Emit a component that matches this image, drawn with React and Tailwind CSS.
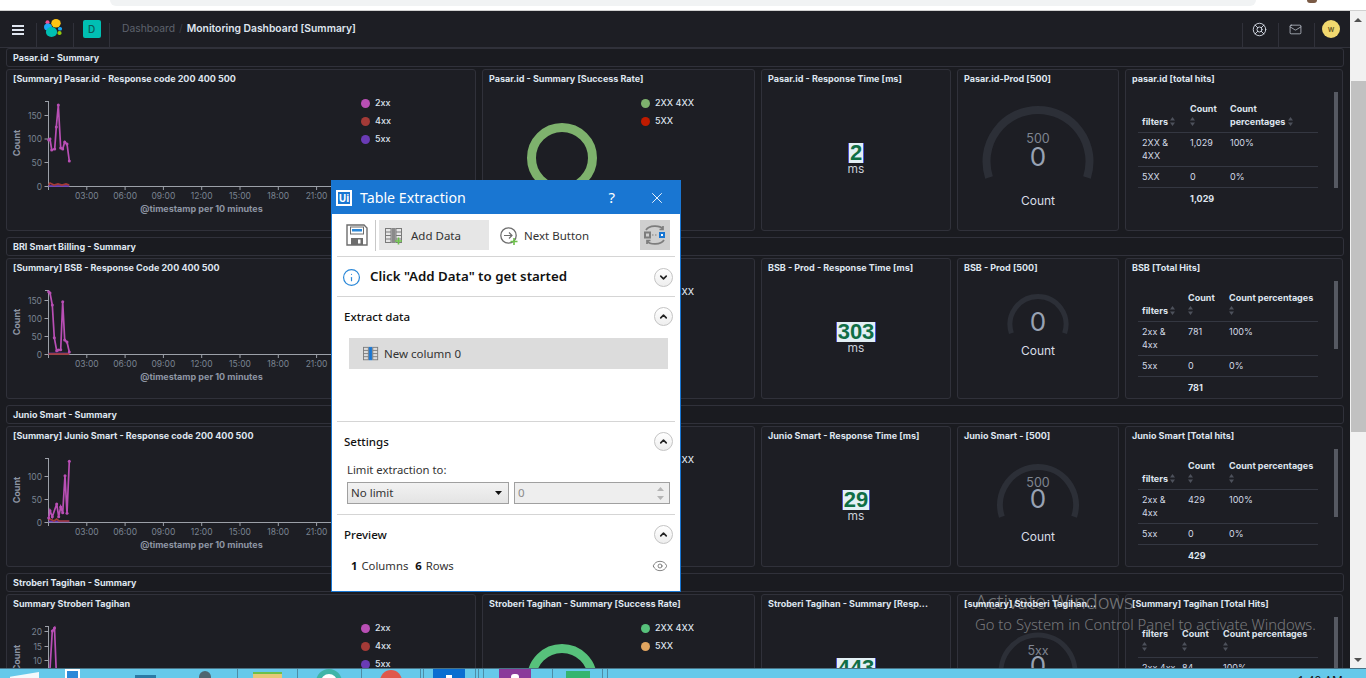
import React from 'react';
import { ChevronDown, ChevronUp, Eye, Info, LifeBuoy, Mail, X } from 'lucide-react';

const FONT_DASH = 'font-["Inter",sans-serif]';
const FONT_DIALOG = 'font-["Noto_Sans",sans-serif]';

const HOURS = ['03:00', '06:00', '09:00', '12:00', '15:00', '18:00', '21:00'];

const SECTIONS = [
    {
        name: 'Pasar.id - Summary',
        panelHeight: 'h-[162px]',
        chart: {
            title: '[Summary] Pasar.id - Response code 200 400 500',
            axisTop: 13,
            axisBottom: 98,
            ticks: [[150, 27], [100, 50.5], [50, 74], [0, 98]],
            labelY: 111,
            captionY: 124,
            countY: 55,
            pink: [[41.7, 52], [43, 51], [44.7, 62], [47.7, 61], [49.3, 39], [51.3, 17], [53.7, 60], [55.7, 61], [57.7, 54], [60, 56], [62.3, 73]],
            red: [[41.7, 97], [43, 95], [47, 97], [51, 96], [55, 97], [59, 96], [62.3, 97]],
            blue: [[41.7, 98], [62.3, 98]],
        },
        donut: { title: 'Pasar.id - Summary [Success Rate]', y: 70, color: '#7eb26d', second: '#bf1b00', labels: ['2XX 4XX', '5XX'] },
        metric: { title: 'Pasar.id - Response Time [ms]', value: '2' },
        gauge: { title: 'Pasar.id-Prod [500]', r: 51.5, stroke: 8, cy: 73.5, top: '500', topY: 55, zeroY: 78, countY: 117 },
        table: {
            title: 'pasar.id [total hits]',
            cols: ['w-[48px]', 'w-[40px]', 'w-[92px]'],
            pctBreak: true,
            rows: [['2XX &\n4XX', '1,029', '100%'], ['5XX', '0', '0%']],
            total: '1,029',
            thumb: 'h-[96px]',
        },
    },
    {
        name: 'BRI Smart Billing - Summary',
        panelHeight: 'h-[141px]',
        chart: {
            title: '[Summary] BSB - Response Code 200 400 500',
            axisTop: 13,
            axisBottom: 77,
            ticks: [[150, 23], [100, 41], [50, 59], [0, 77]],
            labelY: 90,
            captionY: 103,
            countY: 45,
            pink: [[41.7, 14.7], [43, 16], [45.3, 28], [47.3, 60.7], [49.7, 73.7], [51.3, 73], [53.7, 72.7], [55.7, 24.7], [57.7, 63], [60, 65], [62.3, 75]],
            red: [[41.7, 77], [62.3, 77]],
            blue: [[41.7, 76.5], [62.3, 76.5]],
        },
        donut: { title: 'BSB - Summary [Success Rate]', y: 62, color: '#7eb26d', second: '#bf1b00', labels: ['2XX 4XX', '5XX'] },
        metric: { title: 'BSB - Prod - Response Time [ms]', value: '303' },
        gauge: { title: 'BSB - Prod [500]', r: 28, stroke: 5, cy: 47.5, zeroY: 54, countY: 78 },
        table: {
            title: 'BSB [Total Hits]',
            cols: ['w-[46px]', 'w-[41px]', 'w-[93px]'],
            rows: [['2xx &\n4xx', '781', '100%'], ['5xx', '0', '0%']],
            total: '781',
            thumb: 'h-[68px]',
        },
    },
    {
        name: 'Junio Smart - Summary',
        panelHeight: 'h-[141px]',
        chart: {
            title: '[Summary] Junio Smart - Response code 200 400 500',
            axisTop: 13,
            axisBottom: 77,
            ticks: [[100, 31], [50, 54], [0, 77]],
            labelY: 90,
            captionY: 103,
            countY: 45,
            pink: [[41.7, 73], [43, 65.7], [45.3, 71.7], [49.7, 59], [51.7, 71.7], [53.7, 62], [55.7, 67.7], [58, 30.7], [60, 68.3], [62.3, 16.3]],
            red: [[41.7, 75], [43, 74], [47, 76], [49.7, 74], [52, 76], [62.3, 76]],
            blue: [[41.7, 76.5], [62.3, 76.5]],
        },
        donut: { title: 'Junio Smart - Summary [Success Rate]', y: 62, color: '#7eb26d', second: '#bf1b00', labels: ['2XX 4XX', '5XX'] },
        metric: { title: 'Junio Smart - Response Time [ms]', value: '29' },
        gauge: { title: 'Junio Smart - [500]', r: 38, stroke: 6, cy: 60, top: '500', topY: 42, zeroY: 63, countY: 96 },
        table: {
            title: 'Junio Smart [Total hits]',
            cols: ['w-[46px]', 'w-[41px]', 'w-[93px]'],
            rows: [['2xx &\n4xx', '429', '100%'], ['5xx', '0', '0%']],
            total: '429',
            thumb: 'h-[68px]',
        },
    },
    {
        name: 'Stroberi Tagihan - Summary',
        panelHeight: 'h-[141px]',
        chart: {
            title: 'Summary Stroberi Tagihan',
            axisTop: 13,
            axisBottom: 77,
            ticks: [[20, 18], [15, 33], [10, 47], [5, 62], [0, 77]],
            labelY: 90,
            captionY: 103,
            countY: 45,
            pink: [[41.7, 77], [45.3, 18], [47.5, 15], [50, 77]],
            red: [[41.7, 77], [62.3, 77]],
            blue: [[41.7, 77], [62.3, 77]],
        },
        donut: { title: 'Stroberi Tagihan - Summary [Success Rate]', y: 66, color: '#57c17b', second: '#e0a45f', labels: ['2XX 4XX', '5XX'] },
        metric: { title: 'Stroberi Tagihan - Summary [Resp...', value: '443' },
        gauge: { title: '[summary] Stroberi Tagihan...', r: 37, stroke: 5, cy: 59, top: '5xx', topY: 42, zeroY: 62, countY: 96 },
        table: {
            title: '[Summary] Tagihan [Total Hits]',
            cols: ['w-[40px]', 'w-[41px]', 'w-[99px]'],
            filtersStacked: true,
            rows: [['2xx 4xx', '84', '100%'], ['5xx', '0', '0%']],
            total: '84',
            thumb: 'h-[68px]',
        },
    },
];

const Panel = ({ title, children }) => (
    <div className="flex h-full min-h-0 min-w-0 flex-col rounded-[3px] border border-[#30313a] bg-[#1d1e24]">
        <div className="h-[18px] shrink-0 truncate px-[6px] pt-[2px] text-[9px] leading-[13px] font-bold text-[#dfe5ef]">{title}</div>
        <div className="flex min-h-0 flex-1">{children}</div>
    </div>
);

const Legend = ({ items }) => (
    <ul className="pt-[6px]">
        {items.map(([label, color]) => (
            <li key={label} className="flex h-[18px] items-center gap-[5px] whitespace-nowrap text-[9px] font-medium text-[#dfe5ef]">
                <span className="h-[9px] w-[9px] rounded-full" style={{ backgroundColor: color }} />
                {label}
            </li>
        ))}
    </ul>
);

const Line = ({ points, color, dots }) => (
    <g>
        <polyline points={points.map((p) => p.join(',')).join(' ')} fill="none" stroke={color} strokeWidth="1.7" />
        {dots && points.map((p) => <circle key={p.join()} cx={p[0]} cy={p[1]} r="1.5" fill={color} />)}
    </g>
);

const LineChart = ({ chart }) => {
    const { axisTop, axisBottom, ticks, labelY, captionY, countY } = chart;
    return (
        <svg width="354" className="h-full shrink-0 font-['Inter',sans-serif]">
            <line x1="41.5" y1={axisTop} x2="41.5" y2={axisBottom} stroke="#9ca0a8" />
            <line x1="38" y1={axisTop + 0.5} x2="41.5" y2={axisTop + 0.5} stroke="#9ca0a8" />
            <line x1="41.5" y1={axisBottom + 0.5} x2="354" y2={axisBottom + 0.5} stroke="#9ca0a8" />
            {ticks.map(([value, y]) => (
                <g key={value}>
                    <line x1="37.5" y1={y + 0.5} x2="41.5" y2={y + 0.5} stroke="#9ca0a8" />
                    <text x="35" y={y + 3.5} textAnchor="end" fontSize="8.5" fill="#7a8391">{value}</text>
                </g>
            ))}
            <line x1="41.5" y1={axisBottom} x2="41.5" y2={axisBottom + 4} stroke="#9ca0a8" />
            {HOURS.map((hour, i) => (
                <g key={hour}>
                    <line x1={79.8 + i * 38.3} y1={axisBottom} x2={79.8 + i * 38.3} y2={axisBottom + 4} stroke="#9ca0a8" />
                    <text x={79.8 + i * 38.3} y={labelY} textAnchor="middle" fontSize="8.5" fill="#7a8391">{hour}</text>
                </g>
            ))}
            <text x="194.5" y={captionY} textAnchor="middle" fontSize="9" fontWeight="700" fill="#8d95a3">@timestamp per 10 minutes</text>
            <text transform={`translate(13 ${countY}) rotate(-90)`} textAnchor="middle" fontSize="9" fontWeight="700" fill="#8d95a3">Count</text>
            <Line points={chart.blue} color="#6a3bb5" />
            <Line points={chart.red} color="#a33a37" />
            <Line points={chart.pink} color="#b94fb5" dots />
        </svg>
    );
};

const Donut = ({ donut }) => (
    <>
        <svg width="158" className="h-full shrink-0">
            <circle cx="79" cy={donut.y} r="30.5" fill="none" stroke={donut.color} strokeWidth="9" />
        </svg>
        <Legend items={[[donut.labels[0], donut.color], [donut.labels[1], donut.second]]} />
    </>
);

const Metric = ({ value }) => (
    <div className="flex flex-1 flex-col items-center justify-center">
        <span className="h-[20px] border-x border-[#4b52c8] bg-[#e3f0f5] px-px font-['Liberation_Sans',sans-serif] text-[22px] leading-[20px] font-bold text-[#0f6e45]">{value}</span>
        <span className="text-[12px] leading-[12px] text-[#c9ced8]">ms</span>
    </div>
);

// arc runs over the top, from lower left to lower right
const arcPath = (cx, cy, r) => {
    const a = (18 * Math.PI) / 180;
    const dx = r * Math.cos(a);
    const dy = r * Math.sin(a);
    return `M ${cx - dx} ${cy + dy} A ${r} ${r} 0 1 1 ${cx + dx} ${cy + dy}`;
};

const Gauge = ({ gauge }) => (
    <svg width="160" className="h-full font-['Inter',sans-serif]">
        <path d={arcPath(80, gauge.cy, gauge.r)} fill="none" stroke="#2c2f37" strokeWidth={gauge.stroke} />
        {gauge.top && <text x="80" y={gauge.topY} textAnchor="middle" fontSize="12.5" fill="#7f8591">{gauge.top}</text>}
        <text x="80" y={gauge.zeroY} textAnchor="middle" fontSize="26" fill="#98a2b3">0</text>
        <text x="80" y={gauge.countY} textAnchor="middle" fontSize="12" fill="#d8dde6">Count</text>
    </svg>
);

const SortIcon = ({ block }) => (
    <svg width="5" height="9" viewBox="0 0 5 9" className={block ? 'my-[2px] block' : 'inline-block align-[-1px]'}>
        <path d="M2.5 0 5 3.5H0z M2.5 9 0 5.5h5z" fill="#4d515b" />
    </svg>
);

const HitsTable = ({ table }) => (
    <div className="flex flex-1 pl-[12px]">
        <table className="mt-[11px] h-fit w-[180px] table-fixed border-collapse self-start text-[9px] leading-[13px] text-[#d3dae6]">
            <colgroup>
                {table.cols.map((c) => <col key={c} className={c} />)}
            </colgroup>
            <thead>
                <tr className="border-b border-[#343741] align-bottom text-[#dfe5ef]">
                    {table.filtersStacked ? (
                        <th className="pt-[3px] pb-[4px] pl-[4px] text-left font-bold">filters<SortIcon block /></th>
                    ) : (
                        <th className="pt-[3px] pb-[4px] pl-[4px] text-left font-bold">filters <SortIcon /></th>
                    )}
                    <th className="pt-[3px] pb-[4px] pl-[4px] text-left font-bold">Count<SortIcon block /></th>
                    {table.pctBreak ? (
                        <th className="pt-[3px] pb-[4px] pl-[4px] text-left font-bold">Count<br />percentages <SortIcon /></th>
                    ) : (
                        <th className="pt-[3px] pb-[4px] pl-[4px] text-left font-bold whitespace-nowrap">Count percentages<SortIcon block /></th>
                    )}
                </tr>
            </thead>
            <tbody>
                {table.rows.map((row) => (
                    <tr key={row[0]} className="border-b border-[#343741] align-top">
                        {row.map((cell, i) => <td key={i} className="pt-[3px] pb-[4px] pl-[4px] whitespace-pre-line">{cell}</td>)}
                    </tr>
                ))}
                <tr>
                    <td />
                    <td className="py-[4px] pl-[4px] font-bold text-[#dfe5ef]">{table.total}</td>
                    <td />
                </tr>
            </tbody>
        </table>
        <div className={`mt-[4px] ml-[16px] w-[4px] bg-[#565962] ${table.thumb}`} />
    </div>
);

const Section = ({ section }) => (
    <section className="mb-[6px] flex shrink-0 flex-col gap-[2px]">
        <div className="flex h-[19px] items-center rounded-[3px] border border-[#30313a] px-[6px] pt-px text-[9px] font-bold text-[#dfe5ef]">{section.name}</div>
        <div className={`grid grid-cols-[470px_273px_190px_162px_218px] grid-rows-[minmax(0,1fr)] gap-x-[6px] ${section.panelHeight}`}>
            <Panel title={section.chart.title}>
                <LineChart chart={section.chart} />
                <Legend items={[['2xx', '#b94fb5'], ['4xx', '#a33a37'], ['5xx', '#6a3bb5']]} />
            </Panel>
            <Panel title={section.donut.title}><Donut donut={section.donut} /></Panel>
            <Panel title={section.metric.title}><Metric value={section.metric.value} /></Panel>
            <Panel title={section.gauge.title}><Gauge gauge={section.gauge} /></Panel>
            <Panel title={section.table.title}><HitsTable table={section.table} /></Panel>
        </div>
    </section>
);

const ElasticLogo = () => (
    <svg width="20" height="20" viewBox="0 0 20 20">
        <circle cx="3.5" cy="3.2" r="2" fill="#ee5097" />
        <ellipse cx="12" cy="4.2" rx="4.7" ry="4.2" fill="#fec514" />
        <ellipse cx="4" cy="8" rx="4" ry="3.6" fill="#1ba9f5" />
        <ellipse cx="7.5" cy="13" rx="5.6" ry="5" fill="#00bfb3" />
        <rect x="14" y="8" width="4" height="3.6" rx="1.6" fill="#1ba9f5" />
        <rect x="13.5" y="12" width="4" height="4" rx="1.8" fill="#93c90e" />
    </svg>
);

const Header = () => (
    <header className="flex h-[37px] shrink-0 items-stretch border-b border-[#30313a] bg-[#1d1e24]">
        <div className="flex w-[36px] items-center justify-center pt-[2px]">
            <div className="flex w-[12px] flex-col gap-[2px]">
                <span className="h-[2px] bg-[#dfe5ef]" />
                <span className="h-[2px] bg-[#dfe5ef]" />
                <span className="h-[2px] bg-[#dfe5ef]" />
            </div>
        </div>
        <div className="mt-[12px] flex w-[37px] items-start justify-center border-l border-[#30313a] pr-[2px]">
            <div className="-mt-[4px]"><ElasticLogo /></div>
        </div>
        <div className="mt-[12px] flex w-[36px] items-start justify-center border-l border-[#30313a]">
            <span className="-mt-[3px] flex h-[18px] w-[18px] items-center justify-center rounded-[2px] bg-[#00bfb3] text-[10px] font-medium text-[#0a5a55]">D</span>
        </div>
        <div className="mt-[12px] flex items-start gap-[4px] border-l border-[#30313a] pl-[12px] text-[10.3px] leading-[11px]">
            <span className="text-[#5d626d]">Dashboard</span>
            <span className="text-[#3a3d46]">/</span>
            <span className="font-semibold text-[#dfe5ef]">Monitoring Dashboard [Summary]</span>
        </div>
        <div className="ml-auto flex">
            <div className="mt-[12px] flex w-[36px] items-start justify-center border-l border-[#30313a] pr-[2px] text-[#dfe5ef]"><div className="-mt-[1px]"><LifeBuoy size={15} strokeWidth={1.4} /></div></div>
            <div className="mt-[12px] flex w-[36px] items-start justify-center border-l border-[#30313a] pr-[2px] text-[#dfe5ef]"><Mail size={13} strokeWidth={1.2} /></div>
            <div className="mt-[12px] flex w-[36px] items-start justify-center border-l border-[#30313a] pr-[3px]">
                <span className="-mt-[3px] flex h-[18px] w-[18px] items-center justify-center rounded-full bg-[#f1d86f] text-[8px] leading-none font-medium text-[#5c4f1a]">w</span>
            </div>
        </div>
    </header>
);

const Scrollbar = () => (
    <aside className="flex w-[16px] shrink-0 flex-col items-center bg-[#f1f1f1]">
        <div className="flex h-[17px] w-full items-center justify-center">
            <svg width="8" height="4" viewBox="0 0 8 4"><path d="M4 0 8 4H0z" fill="#505050" /></svg>
        </div>
        <div className="mt-[53px] h-[351px] w-[15px] bg-[#c1c1c1]" />
        <div className="mt-auto flex h-[17px] w-full items-center justify-center">
            <svg width="8" height="4" viewBox="0 0 8 4"><path d="M4 4 8 0H0z" fill="#505050" /></svg>
        </div>
    </aside>
);

const ToolIcon = ({ center = '#8a8a8a', plus, size = 18 }) => (
    <svg width={size} height={size} viewBox="0 0 18 18" className="shrink-0">
        <rect x="0.5" y="1.5" width="5.5" height="14" fill="none" stroke="#7a7a7a" />
        <rect x="7" y="1.5" width="3" height="14" fill={center} stroke={center} />
        <rect x="11" y="1.5" width="5.5" height="14" fill="none" stroke="#7a7a7a" />
        <path d="M0.5 5h5.5M0.5 8.5h5.5M0.5 12h5.5M11 5h5.5M11 8.5h5.5M11 12h5.5" stroke="#7a7a7a" />
        {plus && <path d="M13.5 10.5v7M10 14h7" stroke="#6cc04a" strokeWidth="1.6" />}
    </svg>
);

const RoundToggle = ({ open }) => (
    <span className="flex h-[19px] w-[19px] items-center justify-center rounded-full border border-[#c4c4c4] bg-gradient-to-b from-white to-[#eeeeee] text-[#222]">
        {open ? <ChevronUp size={11} strokeWidth={3.5} /> : <ChevronDown size={11} strokeWidth={3.5} />}
    </span>
);

const SectionHead = ({ title, height }) => (
    <div className={`flex items-center justify-between pt-px pr-[2px] pl-[7px] ${height}`}>
        <span className="text-[11.5px] font-medium text-[#111]">{title}</span>
        <RoundToggle open />
    </div>
);

const TableExtraction = () => (
    <div className={`absolute top-[180px] left-[331px] flex h-[412px] w-[350px] flex-col border border-[#1976d2] bg-white ${FONT_DIALOG}`}>
        <div className="flex h-[33px] shrink-0 items-center bg-[#1976d2] pl-[4px] text-white">
            <span className="flex h-[16px] w-[16px] items-center justify-center border-2 border-white text-[10px] leading-none font-bold">Ui</span>
            <span className="ml-[8px] text-[14.2px]">Table Extraction</span>
            <span className="ml-auto text-[15px]">?</span>
            <span className="mr-[14px] ml-[33px]"><X size={18} strokeWidth={1.2} /></span>
        </div>
        <div className="mx-[5px] flex h-[43px] shrink-0 items-center border-b border-[#d5d5d5]">
            <svg width="22" height="22" viewBox="0 0 22 22" className="ml-[9px] shrink-0">
                <path d="M1 1h17l3 3v17H1z" fill="none" stroke="#6d6d6d" strokeWidth="1.4" />
                <rect x="4.5" y="3" width="13" height="7" fill="none" stroke="#6d6d6d" />
                <rect x="6" y="5" width="10" height="2.5" fill="#2b88d8" />
                <rect x="5" y="14" width="12" height="7" fill="#6d6d6d" />
                <rect x="12" y="15.5" width="2.5" height="4" fill="#fff" />
            </svg>
            <span className="mx-[7px] h-[31px] w-px bg-[#c8c8c8]" />
            <div className="-ml-[4px] flex h-[30px] w-[110px] items-center gap-[8px] bg-[#e6e6e6] pt-px pl-[6px] text-[11.5px] text-[#333]">
                <ToolIcon plus />
                Add Data
            </div>
            <div className="ml-[11px] flex items-center gap-[6px] pt-px text-[11.5px] text-[#333]">
                <svg width="18" height="18" viewBox="0 0 18 18" className="shrink-0">
                    <circle cx="8.5" cy="8.5" r="7.7" fill="none" stroke="#6d6d6d" strokeWidth="1.3" />
                    <path d="M4 8.5h8M9 5.5l3 3-3 3" fill="none" stroke="#6d6d6d" strokeWidth="1.2" />
                    <path d="M14 11v7M10.5 14.5h7" stroke="#6cc04a" strokeWidth="1.6" />
                </svg>
                Next Button
            </div>
            <div className="mr-[5px] ml-auto flex h-[30px] w-[30px] items-center justify-center bg-[#cfcfcf]">
                <svg width="24" height="24" viewBox="0 0 24 24">
                    <path d="M3 7c3-5 14-5 17-1M20 3v3.5h-3.5M21 17c-3 5-14 5-17 1M4 21v-3.5h3.5" fill="none" stroke="#7d7d7d" strokeWidth="1.7" />
                    <rect x="2" y="9.5" width="5" height="5" fill="none" stroke="#7d7d7d" strokeWidth="2" />
                    <rect x="16" y="9" width="6" height="6" fill="#1976d2" />
                    <rect x="18" y="11" width="2" height="2" fill="#fff" />
                    <path d="M9 12h6" stroke="#9a9a9a" strokeWidth="1.5" strokeDasharray="1.5 1.5" />
                </svg>
            </div>
        </div>
        <div className="mx-[5px] flex h-[40px] shrink-0 items-center border-b border-[#d5d5d5] pt-px pr-[2px] pl-[5px]">
            <Info size={19} strokeWidth={1.5} className="text-[#2b88d8]" />
            <span className="ml-[9px] text-[13.3px] font-semibold text-[#111]">Click "Add Data" to get started</span>
            <span className="ml-auto flex"><RoundToggle /></span>
        </div>
        <div className="mx-[5px] h-[125px] shrink-0 border-b border-[#d5d5d5]">
            <SectionHead title="Extract data" height="h-[38px]" />
            <div className="mt-[3px] mr-[7px] ml-[12px] flex h-[31px] items-center gap-[5px] bg-[#dcdcdc] pl-[14px] text-[11.5px] text-[#333]">
                <ToolIcon center="#1976d2" size={16} />
                New column 0
            </div>
        </div>
        <div className="mx-[5px] h-[93px] shrink-0 border-b border-[#d5d5d5]">
            <SectionHead title="Settings" height="h-[38px]" />
            <div className="pt-[2px] pl-[10px] text-[11.3px] leading-[16px] text-[#333]">Limit extraction to:</div>
            <div className="mt-[4px] mr-[5px] ml-[10px] flex gap-[5px] text-[11.5px]">
                <div className="flex h-[22px] w-[162px] items-center justify-between border border-[#a0a0a0] bg-gradient-to-b from-[#f2f2f2] to-[#e4e4e4] pr-[6px] pl-[3px] text-[#333]">
                    No limit
                    <svg width="7" height="4" viewBox="0 0 7 4"><path d="M0 0h7L3.5 4z" fill="#111" /></svg>
                </div>
                <div className="flex h-[22px] flex-1 items-center justify-between border border-[#a0a0a0] bg-[#eeeeee] pr-[5px] pl-[3px] text-[#8c8c8c]">
                    0
                    <svg width="7" height="13" viewBox="0 0 7 13"><path d="M3.5 0 7 4H0zM3.5 13 0 9h7z" fill="#b5b5b5" /></svg>
                </div>
            </div>
        </div>
        <div className="mx-[5px]">
            <SectionHead title="Preview" height="h-[38px]" />
            <div className="mt-[3px] flex items-center pr-[7px] pl-[14px] text-[11.3px] leading-[20px] text-[#333]">
                <b className="font-bold text-[#111]">1</b>
                <span className="ml-[4px]">Columns</span>
                <b className="ml-[7px] font-bold text-[#111]">6</b>
                <span className="ml-[4px]">Rows</span>
                <Eye size={16} strokeWidth={1.2} className="ml-auto text-[#666]" />
            </div>
        </div>
    </div>
);

const TaskSep = () => <span className="h-full w-px shrink-0 bg-[#4e8ca5]" />;

const Taskbar = () => (
    <footer className="relative flex h-[10px] shrink-0 overflow-hidden border-t border-[#4a7487] bg-[#66c9ea]">
        <span className="mt-[3px] ml-[10px] h-[12px] w-[29px] shrink-0 bg-[#f4f9fb] [clip-path:polygon(0_40%,100%_0,100%_100%,0_100%)]" />
        <span className="ml-[26px] h-[16px] w-[15px] shrink-0 border-2 border-white bg-[#2b88d8]" />
        <span className="mt-[6px] ml-[55px] h-[8px] w-[21px] shrink-0 bg-[#2a7aa5]" />
        <span className="mt-[2px] ml-[43px] h-[12px] w-[12px] shrink-0 rounded-full bg-[#4f6670]" />
        <span className="ml-[26px] flex"><TaskSep /></span>
        <span className="mt-[3px] ml-[15px] h-[12px] w-[29px] shrink-0 border-t-2 border-[#6cc04a] bg-[#e6c878]" />
        <span className="ml-[15px] flex"><TaskSep /></span>
        <span className="ml-[18px] h-[26px] w-[26px] shrink-0 rounded-full border-[5px] border-[#3fb5a8] bg-white" />
        <span className="ml-[19px] flex"><TaskSep /></span>
        <span className="mt-[1px] ml-[18px] h-[22px] w-[22px] shrink-0 rounded-full bg-[#e0584b]" />
        <span className="ml-[18px] flex"><TaskSep /></span>
        <span className="ml-[2px] flex"><TaskSep /></span>
        <span className="ml-[9px] flex h-[20px] w-[32px] shrink-0 justify-center bg-[#0a6ed1]"><span className="mt-[6px] h-[3px] w-[6px] bg-white" /></span>
        <span className="ml-[10px] flex"><TaskSep /></span>
        <span className="ml-[2px] flex"><TaskSep /></span>
        <span className="ml-[4px] flex"><TaskSep /></span>
        <span className="ml-[15px] flex h-[20px] w-[32px] shrink-0 justify-center bg-[#8a3a9a]"><span className="mt-[5px] h-[6px] w-[8px] rounded-full bg-white" /></span>
        <span className="ml-[21px] flex"><TaskSep /></span>
        <span className="mt-[2px] ml-[13px] h-[20px] w-[24px] shrink-0 bg-[#33b56f]" />
        <span className="ml-[12px] flex"><TaskSep /></span>
        <span className="ml-[4px] flex"><TaskSep /></span>
        <span className={`mt-[5px] mr-[23px] ml-auto text-[12px] leading-[14px] text-[#111] ${FONT_DIALOG}`}>1:40 AM</span>
    </footer>
);

const App = () => (
    <div className={`relative flex h-[678px] w-[1366px] flex-col overflow-hidden bg-[#1a1b20] ${FONT_DASH}`}>
        <div className="flex h-[11px] shrink-0 border-b border-[#d0d0d0] bg-white">
            <div className="ml-[110px] h-[6px] w-[1146px] rounded-b-[8px] bg-[#f1f3f4]" />
            <div className="ml-[51px] h-[3px] w-[10px] rounded-b-full bg-[#7a5a45]" />
        </div>
        <div className="flex min-h-0 flex-1">
            <div className="flex min-w-0 flex-1 flex-col overflow-hidden">
                <Header />
                <main className="px-[6px]">
                    {SECTIONS.map((section) => <Section key={section.name} section={section} />)}
                </main>
            </div>
            <Scrollbar />
        </div>
        <Taskbar />
        <TableExtraction />
        <div className={`pointer-events-none absolute top-[591px] left-[975px] text-white/40 ${FONT_DIALOG}`}>
            <div className="text-[20px] leading-[22px] font-light">Activate Windows</div>
            <div className="text-[14.8px] leading-[22px] font-light whitespace-nowrap">Go to System in Control Panel to activate Windows.</div>
        </div>
    </div>
);

export default App;
